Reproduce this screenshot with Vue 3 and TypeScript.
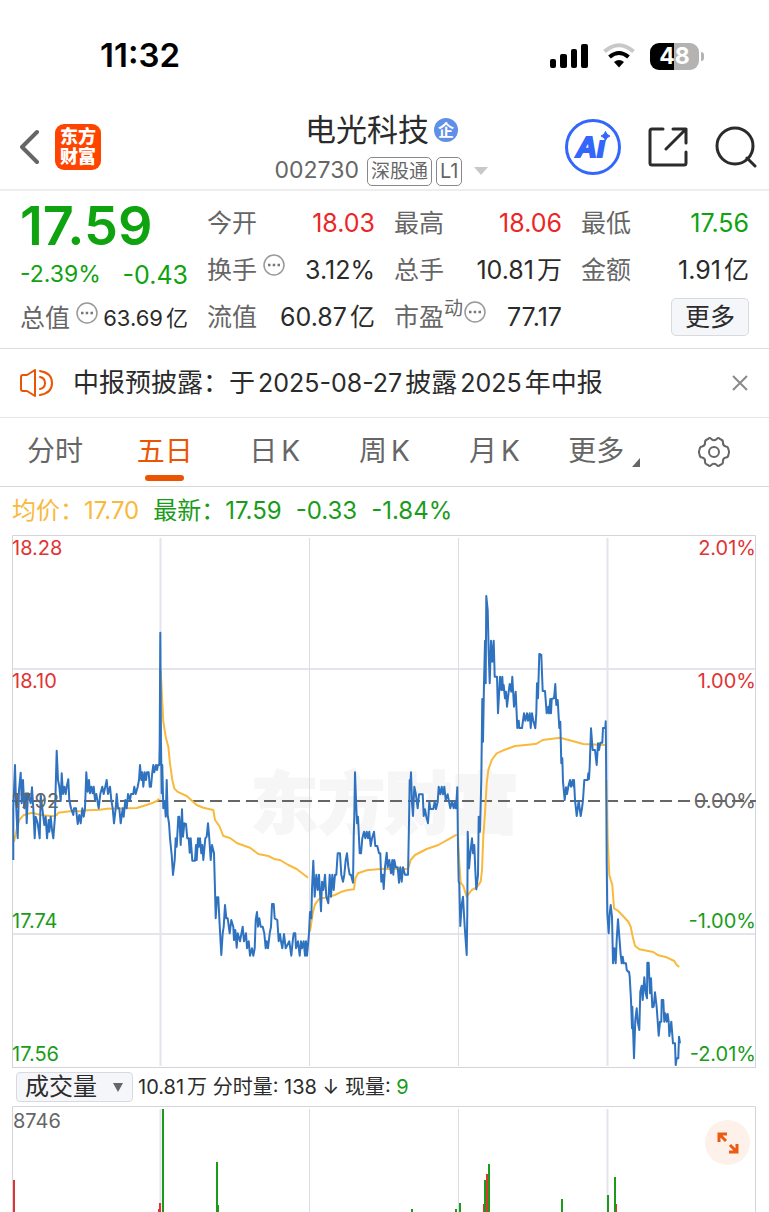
<script setup lang="ts">
import { ref } from 'vue'

type Tone = 'up' | 'down' | 'flat'
interface Stat {
  label: string
  value: string
  unit?: string
  tone: Tone
  sup?: string
  hint?: boolean
}

const stats: Stat[] = [
  { label: '今开', value: '18.03', tone: 'up' },
  { label: '最高', value: '18.06', tone: 'up' },
  { label: '最低', value: '17.56', tone: 'down' },
  { label: '换手', value: '3.12%', tone: 'flat', hint: true },
  { label: '总手', value: '10.81', unit: '万', tone: 'flat' },
  { label: '金额', value: '1.91', unit: '亿', tone: 'flat' },
  { label: '流值', value: '60.87', unit: '亿', tone: 'flat' },
  { label: '市盈', value: '77.17', tone: 'flat', sup: '动', hint: true },
]

const tabs = ['分时', '五日', '日K', '周K', '月K', '更多']
const active = ref('五日')
const noticeOpen = ref(true)
const indicator = ref('成交量')

// Samples are flat x,y pairs in thirds of a unit, relative to each block's origin.
function trace(left: number, top: number, pairs: number[]): string {
  const out: string[] = []
  for (let i = 0; i < pairs.length; i += 2) {
    out.push(`${(left + pairs[i] / 3).toFixed(1)},${(top + pairs[i + 1] / 3).toFixed(1)}`)
  }
  return out.join(' ')
}

const pricePoints = [
  trace(0, 590, [
    40, 810, 40, 655, 45, 525, 48, 640, 53, 745, 57, 600, 62, 548, 65, 640, 69, 570, 73, 655, 78, 610, 80, 700,
    84, 610, 92, 640, 96, 592, 100, 655, 104, 745, 107, 680, 113, 700, 119, 745, 122, 615, 127, 655, 133, 705,
    137, 680, 141, 745, 146, 690, 148, 725, 152, 680, 156, 720, 160, 745, 165, 680, 167, 590, 170, 482, 174, 570,
    178, 590, 182, 633, 185, 550, 189, 612, 193, 590, 197, 612, 200, 590, 205, 568, 208, 630, 213, 655, 220, 675,
    222, 655, 228, 655, 233, 702, 238, 675, 242, 700, 247, 655, 251, 680, 255, 655, 259, 547, 263, 605, 267, 570,
    270, 610, 274, 590, 278, 610, 281, 590, 285, 630, 289, 612, 296, 655, 301, 612, 307, 590, 311, 612, 316, 590,
    320, 570, 324, 612, 330, 590, 334, 630, 338, 655, 342, 700, 347, 655, 350, 612, 354, 655, 358, 655, 362, 700,
    368, 655, 371, 680, 376, 630, 380, 655, 384, 612, 390, 630, 393, 612, 400, 612, 403, 590, 407, 612, 413, 590,
    417, 570, 420, 525, 424, 570, 427, 547, 430, 590, 434, 547, 438, 570, 441, 547, 446, 547, 449, 590, 453, 590,
    457, 547, 460, 525, 463, 547, 468, 525, 471, 540, 474, 525, 478, 525, 479, 460, 481, 128, 483, 460, 485, 610,
    487, 525, 490, 655, 494, 633, 497, 680, 500, 570, 503, 675, 507, 700, 510, 745, 515, 795, 519, 855, 524, 810,
    527, 745, 530, 770, 535, 680, 538, 680, 542, 765, 546, 658, 549, 740, 553, 700, 558, 702, 562, 745, 566, 745,
    569, 788, 572, 745, 577, 812, 585, 812, 588, 765, 590, 810, 594, 745, 597, 770, 600, 745, 604, 790, 607, 765,
    610, 810, 616, 745, 620, 740, 624, 700, 628, 745, 632, 810, 636, 765, 642, 790, 645, 900, 647, 985, 651, 922,
    655, 922, 658, 985, 661, 1040, 664, 1095, 668, 1030, 671, 1010, 675, 945, 679, 985, 683, 985, 689, 1030,
    694, 990, 700, 1010, 702, 1050, 706, 1020, 710, 1073,
  ]),
  trace(200, 740, [
    113, 580, 120, 604, 128, 560, 132, 604, 138, 580, 141, 625, 146, 604, 150, 647, 156, 625, 160, 647, 164, 625,
    167, 540, 171, 516, 174, 560, 178, 535, 182, 560, 188, 560, 193, 580, 197, 625, 200, 604, 204, 625, 209, 580,
    213, 560, 216, 492, 221, 492, 224, 535, 232, 540, 236, 604, 240, 582, 243, 604, 247, 625, 252, 582, 257, 625,
    268, 604, 274, 647, 278, 604, 281, 580, 286, 580, 288, 625, 294, 604, 299, 647, 303, 604, 306, 625, 311, 604,
    315, 647, 318, 604, 321, 647, 325, 604, 327, 580, 330, 516, 334, 535, 336, 447, 340, 362, 344, 470, 349, 404,
    353, 450, 357, 404, 363, 514, 366, 425, 370, 450, 375, 404, 379, 470, 385, 490, 389, 404, 393, 470, 397, 404,
    401, 450, 405, 404, 409, 404, 413, 340, 420, 340, 424, 404, 429, 425, 433, 404, 437, 360, 441, 340, 445, 380,
    449, 404, 453, 404, 459, 428, 461, 290, 463, 230, 465, 97, 468, 180, 471, 250, 474, 230, 479, 340, 483, 340,
    487, 295, 492, 275, 496, 295, 500, 275, 504, 295, 508, 275, 512, 318, 516, 295, 522, 275, 526, 318, 532, 318,
    537, 340, 541, 340, 544, 425, 548, 404, 551, 447, 555, 382, 560, 338, 563, 382, 568, 360, 573, 400, 577, 360,
    580, 404, 583, 360, 587, 382, 593, 382, 597, 428, 601, 382, 605, 425, 609, 382, 615, 404, 624, 404, 627, 250,
    629, 120, 631, 140, 633, 97, 636, 190, 639, 228, 643, 140, 647, 160, 653, 205, 657, 163, 668, 163, 671, 228,
    675, 208, 679, 230, 684, 250, 688, 185, 691, 207, 700, 207, 704, 185, 708, 207, 713, 185, 716, 140, 721, 163,
    725, 140, 729, 163, 733, 140, 737, 180, 743, 163, 747, 185, 751, 205, 756, 185, 761, 205, 765, 185, 768, 205,
    772, 142,
  ]),
  trace(440, 580, [
    52, 622, 54, 800, 56, 905, 58, 910, 61, 1038, 65, 975, 69, 950, 74, 1040, 80, 1125, 82, 1000, 83, 755, 87, 865,
    91, 820, 96, 775, 99, 820, 103, 795, 106, 870, 109, 928, 114, 885, 116, 710, 120, 755, 124, 600, 127, 357,
    129, 485, 132, 310, 135, 182, 137, 310, 139, 48, 143, 90, 146, 220, 149, 310, 153, 182, 157, 245, 161, 182,
    164, 290, 171, 290, 174, 400, 180, 290, 184, 330, 187, 290, 189, 330, 191, 315, 195, 355, 198, 335, 201, 380,
    206, 335, 209, 312, 214, 335, 217, 290, 222, 380, 227, 335, 232, 444, 236, 422, 238, 444, 246, 444, 252, 400,
    256, 422, 261, 400, 264, 422, 269, 400, 272, 444, 276, 400, 280, 422, 286, 445, 289, 400, 291, 310, 294, 355,
    298, 222, 304, 225, 308, 333, 315, 333, 320, 400, 325, 380, 327, 400, 331, 357, 333, 400, 335, 357, 342, 355,
    346, 312, 349, 375, 353, 360, 358, 444, 361, 425, 364, 550, 367, 535, 369, 605, 374, 660, 378, 622, 381, 642,
    385, 620, 390, 600, 393, 620, 398, 600, 401, 620, 402, 600, 405, 660, 410, 708, 416, 663, 422, 708, 426, 685,
    429, 660, 433, 600, 443, 600, 445, 580, 447, 597, 449, 560, 453, 445, 458, 510, 465, 510, 470, 555, 474, 490,
    477, 510, 481, 488, 487, 488, 489, 444, 496, 444, 497, 424, 498, 500, 500, 850, 502, 1000, 506, 1060, 509, 1000,
    512, 975, 516, 1010, 519, 1150, 523, 1105, 527, 1150, 530, 1080, 534, 1018, 539, 1085, 542, 1125, 545, 1150,
    548, 1130, 551, 1150, 558, 1150, 560, 1170, 565, 1175,
  ]),
  trace(590, 700, [
    117, 815, 119, 830, 123, 900, 126, 985, 127, 920, 132, 1075, 136, 960, 140, 925, 143, 965, 148, 990, 151, 875,
    155, 857, 158, 900, 163, 832, 167, 880, 171, 895, 172, 788, 176, 788, 178, 835, 180, 880, 183, 835, 187, 922,
    191, 920, 195, 877, 200, 922, 206, 1007, 210, 965, 214, 965, 215, 900, 220, 900, 223, 965, 226, 940, 230, 965,
    233, 942, 236, 965, 238, 1008, 244, 965, 249, 1030, 255, 1030, 257, 1095, 260, 1075, 265, 1075, 267, 1010,
    270, 1030,
  ]),
].join(' ')

const averageLines = [
  trace(0, 590, [
    42, 755, 52, 710, 58, 690, 70, 676, 95, 668, 110, 672, 130, 676, 160, 679, 170, 675, 175, 668, 210, 664,
    240, 664, 262, 661, 300, 659, 320, 656, 410, 654, 430, 648, 455, 640, 470, 633, 478, 626,
  ]),
  trace(0, 590, [
    482, 240, 486, 320, 490, 395, 498, 445, 505, 470, 510, 520, 517, 570, 523, 595, 532, 605, 560, 618, 590, 645,
    610, 653, 640, 660, 645, 690, 658, 708, 670, 738, 690, 744, 712, 760, 750, 773, 775, 792, 805, 798, 825, 808,
    840, 810, 865, 825, 890, 837, 924, 863,
  ]),
  trace(200, 740, [
    330, 575, 338, 520, 345, 493, 358, 476, 375, 473, 405, 465, 425, 455, 440, 451, 462, 448, 466, 415, 474, 400,
    500, 391, 550, 386, 624, 387, 632, 360, 645, 345, 680, 327, 715, 315, 745, 298, 770, 284,
  ]),
  trace(440, 580, [
    54, 770, 58, 850, 62, 908, 70, 918, 80, 950, 95, 930, 110, 922, 122, 905, 126, 870, 130, 770, 135, 700, 140, 610,
    145, 570, 155, 540, 170, 520, 190, 511, 225, 498, 265, 494, 290, 491, 308, 480, 360, 473, 400, 484, 430, 492,
    495, 495,
  ]),
  trace(440, 580, [
    499, 600, 503, 780, 508, 885, 517, 915, 522, 985, 535, 993, 565, 1025, 572, 1040, 578, 1070, 585, 1097,
    598, 1108, 640, 1116, 655, 1126, 680, 1132, 703, 1143, 710, 1155, 718, 1161,
  ]),
]

const dayLines = [
  { x: 160, strong: true },
  { x: 309, strong: false },
  { x: 458, strong: false },
  { x: 607, strong: true },
]

interface Bar {
  x: number
  top: number
  tone: 'up' | 'down'
}
const bars: Bar[] = [
  { x: 13, top: 1180, tone: 'up' },
  { x: 158, top: 1209, tone: 'up' },
  { x: 159, top: 1203, tone: 'up' },
  { x: 162, top: 1109, tone: 'down' },
  { x: 216, top: 1162, tone: 'down' },
  { x: 217, top: 1205, tone: 'down' },
  { x: 411, top: 1209, tone: 'down' },
  { x: 455, top: 1209, tone: 'down' },
  { x: 459, top: 1203, tone: 'down' },
  { x: 483, top: 1204, tone: 'up' },
  { x: 484, top: 1180, tone: 'down' },
  { x: 488, top: 1164, tone: 'down' },
  { x: 486, top: 1174, tone: 'up' },
  { x: 561, top: 1199, tone: 'down' },
  { x: 607, top: 1195, tone: 'down' },
  { x: 615, top: 1204, tone: 'up' },
  { x: 614, top: 1177, tone: 'down' },
]
</script>

<template>
  <div class="page">
    <div class="status">
      <span class="time">11:32</span>
      <div class="status-icons">
        <svg width="38" height="26" viewBox="0 0 38 26" aria-hidden="true">
          <rect x="0" y="16" width="6" height="9" rx="2" />
          <rect x="10" y="11" width="7" height="14" rx="2" />
          <rect x="21" y="6" width="6" height="19" rx="2" />
          <rect x="31" y="1" width="7" height="24" rx="2" />
        </svg>
        <svg width="32" height="26" viewBox="0 0 32 26" fill="none" aria-hidden="true">
          <path d="M1.5 8.500Q16-4 30.500 8.500" stroke="#c8c8c8" stroke-width="4" />
          <path d="M6.500 14Q16 6 25.500 14" stroke="#000" stroke-width="4" />
          <path d="M11 19Q16 15 21 19L16 24.500Z" fill="#000" />
        </svg>
        <div class="battery"><span class="cell">48</span><i class="nub"></i></div>
      </div>
    </div>

    <header class="header">
      <div class="lead">
        <button class="plain" aria-label="返回">
          <svg width="20" height="36" viewBox="0 0 20 36" fill="none" stroke="#666" stroke-width="4" stroke-linecap="round" stroke-linejoin="round">
            <path d="M17 3 2 18l15 15" />
          </svg>
        </button>
        <div class="brand"><span>东方</span><span>财富</span></div>
      </div>
      <div class="title">
        <h1>电光科技<span class="badge">企</span></h1>
        <div class="code">
          <span class="num">002730</span>
          <span class="tag">深股通</span>
          <span class="tag l1">L1</span>
          <svg width="14" height="8" viewBox="0 0 14 8" aria-hidden="true"><path d="M0 0h14L7 8Z" fill="#c8c8c8" /></svg>
        </div>
      </div>
      <div class="actions">
        <button class="plain" aria-label="Ai">
          <svg width="56" height="56" viewBox="0 0 56 56">
            <circle cx="28" cy="28" r="26.500" fill="none" stroke="#3366fa" stroke-width="3" />
            <text class="ai" x="11" y="38">Aı</text>
            <path d="M40.500 12.500q1 3.500 4.500 4.500-3.500 1-4.500 4.500-1-3.500-4.500-4.500 3.500-1 4.500-4.500Z" fill="#3366fa" stroke="#3366fa" />
          </svg>
        </button>
        <button class="plain" aria-label="分享">
          <svg width="40" height="40" viewBox="0 0 40 40" fill="none" stroke="#2b2b2b" stroke-width="3" stroke-linecap="round" stroke-linejoin="round">
            <path d="M15 2H4Q2 2 2 4v32q0 2 2 2h32q2 0 2-2V25M25 2h13v14M38 2 18 22" />
          </svg>
        </button>
        <button class="plain" aria-label="搜索">
          <svg width="42" height="42" viewBox="0 0 42 42" fill="none" stroke="#2b2b2b" stroke-width="3" stroke-linecap="round">
            <circle cx="20" cy="20" r="18" />
            <path d="m32 32 8 8" />
          </svg>
        </button>
      </div>
    </header>

    <section class="quote">
      <div class="main">
        <div class="price">17.59</div>
        <div class="delta"><span class="pct">-2.39%</span><span>-0.43</span></div>
        <div class="cap">
          <span class="label">总值</span>
          <svg class="hint" width="22" height="22" viewBox="0 0 22 22" aria-hidden="true">
            <circle cx="11" cy="11" r="10" fill="none" stroke="#999" stroke-width="1.5" />
            <path d="M5 11h2.500M9.700 11h2.500M14.500 11h2.500" stroke="#777" stroke-width="2.500" />
          </svg>
          <span class="cap-value">63.69<span class="unit">亿</span></span>
        </div>
      </div>
      <div class="stats">
        <div v-for="s in stats" :key="s.label" class="stat">
          <span class="label">{{ s.label }}</span>
          <span v-if="s.sup" class="sup">{{ s.sup }}</span>
          <svg v-if="s.hint" class="hint" :class="{ tight: s.sup }" width="22" height="22" viewBox="0 0 22 22" aria-hidden="true">
            <circle cx="11" cy="11" r="10" fill="none" stroke="#999" stroke-width="1.5" />
            <path d="M5 11h2.500M9.700 11h2.500M14.500 11h2.500" stroke="#777" stroke-width="2.500" />
          </svg>
          <span class="value" :class="s.tone">{{ s.value }}<span v-if="s.unit" class="unit">{{ s.unit }}</span></span>
        </div>
        <div class="stat"><button class="more">更多</button></div>
      </div>
    </section>

    <section v-if="noticeOpen" class="notice">
      <svg width="33" height="28" viewBox="0 0 33 28" fill="none" stroke="#ea5504" stroke-width="2" stroke-linecap="round" stroke-linejoin="round" aria-hidden="true">
        <path d="M15 1v26l-8-5H3q-2 0-2-2V8q0-2 2-2h4ZM20 8q5 1 5 6t-5 6M20 2q12 2 12 12T20 26" />
      </svg>
      <p>中报预披露：于<span class="date">2025-08-27</span>披露<span class="date">2025</span>年中报</p>
      <button class="plain" aria-label="关闭" @click="noticeOpen = false">
        <svg width="16" height="16" viewBox="0 0 16 16" fill="none" stroke="#8a8a8a" stroke-width="2"><path d="m1 1 14 14M15 1 1 15" /></svg>
      </button>
    </section>

    <nav class="tabs">
      <button v-for="t in tabs" :key="t" class="tab" :class="{ active: active === t }" @click="active = t">
        <template v-if="t.endsWith('K')">{{ t[0] }}<span class="k">K</span></template>
        <template v-else>{{ t }}</template>
        <svg v-if="t === '更多'" class="corner" width="8" height="9" viewBox="0 0 8 9" aria-hidden="true"><path d="M8 0v9H0Z" fill="#666" /></svg>
      </button>
      <button class="tab" aria-label="设置">
        <svg width="32" height="30" viewBox="0 0 32 30" fill="none" stroke="#666" stroke-width="2" stroke-linejoin="round">
          <path d="M10 2Q12 0 13.500 2.200Q16 4.200 18.500 2.200Q20 0 22 2Q25 3 25 5Q24.500 9 28 9.500Q30 9.500 30.500 12.500Q31.500 15 30.500 17.500Q30 20.500 28 20.500Q24.500 21 25 25Q25 27 22 28Q20 30 18.500 27.800Q16 25.800 13.500 27.800Q12 30 10 28Q7 27 7 25Q7.500 21 4 20.500Q2 20.500 1.500 17.500Q.5 15 1.500 12.500Q2 9.500 4 9.500Q7.500 9 7 5Q7 3 10 2Z" />
          <circle cx="16" cy="15" r="5" />
        </svg>
      </button>
    </nav>

    <div class="summary">
      <span class="avg">均价：17.70</span>
      <span class="last">最新：17.59</span>
      <span class="last">-0.33</span>
      <span class="last">-1.84%</span>
    </div>

    <svg class="chart" viewBox="0 535 769 533" role="img" aria-label="五日走势">
      <text class="mark" x="385" y="828">东方财富</text>
      <g class="grid">
        <path class="strong" d="M12 669h744M12 934h744" />
        <path v-for="d in dayLines" :key="d.x" :class="{ strong: d.strong }" :d="`M${d.x + 0.5} 538v528`" />
        <path class="frame" d="M12.500 1068V535.500h743v532" />
        <path class="frame" d="M12 1067.500h744" />
      </g>
      <path class="base" d="M12 801h744" />
      <polyline v-for="(p, i) in averageLines" :key="i" class="average" :points="p" />
      <polyline class="trend" :points="pricePoints" />
      <g class="axis">
        <text class="up" x="12" y="555">18.28</text>
        <text class="up" x="12" y="688">18.10</text>
        <text x="12" y="808">17.92</text>
        <text class="down" x="12" y="928">17.74</text>
        <text class="down" x="12" y="1061">17.56</text>
        <g text-anchor="end">
          <text class="up" x="756" y="555">2.01%</text>
          <text class="up" x="756" y="688">1.00%</text>
          <text x="756" y="808">0.00%</text>
          <text class="down" x="756" y="928">-1.00%</text>
          <text class="down" x="756" y="1061">-2.01%</text>
        </g>
      </g>
    </svg>

    <div class="toolbar">
      <div class="picker">
        <select v-model="indicator" aria-label="指标">
          <option>成交量</option>
          <option>成交额</option>
        </select>
        <svg width="10" height="9" viewBox="0 0 10 9" aria-hidden="true"><path d="M0 0h10L5 9Z" fill="#666" /></svg>
      </div>
      <span class="readout">10.81<span class="unit">万</span> 分时量: 138 ↓ 现量: <b>9</b></span>
    </div>

    <div class="volume">
      <svg class="chart" viewBox="0 1106 769 106" role="img" aria-label="成交量">
        <g class="grid">
          <path v-for="d in dayLines" :key="d.x" :class="{ strong: d.strong }" :d="`M${d.x + 0.5} 1109v103`" />
          <path class="frame" d="M12.500 1212V1106.500h743v106" />
        </g>
        <rect v-for="b in bars" :key="b.x" :class="b.tone" :x="b.x" :y="b.top" width="2" :height="1212 - b.top" />
        <g class="axis"><text x="13" y="1128">8746</text></g>
      </svg>
      <button class="expand" aria-label="全屏">
        <svg width="24" height="24" viewBox="0 0 24 24" fill="none" stroke="#ea5b14" stroke-width="3">
          <path d="M3 11V3h8M3 3l7 7M21 13v8h-8M21 21l-7-7" />
        </svg>
      </button>
    </div>
  </div>
</template>

<style>
body {
  background: #fff;
}
</style>

<style scoped>
.page {
  font-family: Inter, 'Noto Sans CJK SC', sans-serif;
  font-weight: 400;
  line-height: 1.2;
  color: #2b2b2b;
  background: #fff;
  overflow: hidden;
}
svg {
  display: block;
  flex: none;
}
.plain {
  padding: 0;
  border: 0;
  background: none;
  cursor: pointer;
}
.status {
  display: flex;
  align-items: center;
  justify-content: space-between;
  height: 40px;
  padding: 36px 65px 28px 100px;
  color: #000;
}
.time {
  font-size: 33px;
  font-weight: 600;
}
.status-icons {
  display: flex;
  align-items: center;
  gap: 15px;
}
.battery {
  display: flex;
  align-items: center;
  gap: 2px;
}
.cell {
  width: 49px;
  border-radius: 9px;
  background: linear-gradient(to right, #000 48%, #b3b3b3 48%);
  color: #fff;
  font-size: 23px;
  font-weight: 700;
  line-height: 27px;
  text-align: center;
}
.nub {
  width: 3px;
  height: 9px;
  border-radius: 0 3px 3px 0;
  background: #b3b3b3;
}
.header {
  display: grid;
  grid-template-columns: 1fr auto 1fr;
  align-items: center;
  padding: 8px 12px 3px;
  border-bottom: 2px solid #eee;
}
.lead {
  display: flex;
  align-items: center;
  gap: 15px;
  margin-bottom: 4px;
  padding-left: 8px;
}
.brand {
  display: flex;
  flex-direction: column;
  align-items: center;
  justify-content: center;
  width: 46px;
  height: 46px;
  border-radius: 9px;
  background: #ff4400;
  color: #fff;
  font-size: 18px;
  font-weight: 900;
  line-height: 20px;
}
.title {
  display: flex;
  flex-direction: column;
  align-items: center;
  gap: 8px;
  margin-right: 6px;
}
h1 {
  display: flex;
  align-items: center;
  gap: 5px;
  margin: 0;
  font-size: 31px;
  font-weight: 400;
  line-height: 36px;
}
.badge {
  width: 24px;
  border-radius: 12px;
  background: #5f8fe8;
  color: #fff;
  font-size: 16px;
  font-weight: 700;
  line-height: 24px;
  text-align: center;
}
.code {
  display: flex;
  align-items: center;
  height: 30px;
  color: #666;
}
.num {
  margin-right: 8px;
  font-size: 23px;
}
.tag {
  margin-right: 4px;
  padding: 0 3px;
  border: 1px solid #888;
  border-radius: 5px;
  font-size: 19px;
  line-height: 27px;
}
.l1 {
  margin-right: 12px;
  font-size: 20px;
}
.actions {
  display: flex;
  align-items: center;
  justify-content: flex-end;
  gap: 27px;
  margin-bottom: 4px;
}
.ai {
  fill: #3366fa;
  stroke: #3366fa;
  stroke-width: 2;
  font-size: 29px;
  font-style: italic;
  font-weight: 900;
}
.quote {
  display: grid;
  grid-template-columns: minmax(0, 168fr) minmax(0, 542fr);
  column-gap: 19px;
  padding: 8px 20px;
  border-bottom: 1px solid #ddd;
}
.main {
  display: flex;
  flex-direction: column;
  color: #0fa30f;
}
.price {
  font-size: 54px;
  font-weight: 600;
  line-height: 54px;
}
.delta {
  display: flex;
  align-items: center;
  justify-content: space-between;
  height: 43px;
  font-size: 25px;
}
.pct {
  font-size: 23px;
}
.cap {
  display: flex;
  align-items: center;
  height: 44px;
  color: #2b2b2b;
}
.cap-value {
  margin-left: auto;
  font-size: 22px;
}
.stats {
  display: grid;
  grid-template-columns: repeat(3, 1fr);
  grid-auto-rows: 47px;
  column-gap: 19px;
}
.stat {
  display: flex;
  align-items: center;
  white-space: nowrap;
}
.label {
  color: #666;
  font-size: 25px;
}
.hint {
  margin: 0 0 10px 6px;
}
.tight {
  margin-left: 1px;
}
.sup {
  margin-bottom: 14px;
  color: #666;
  font-size: 19px;
}
.value {
  margin-left: auto;
  font-size: 25px;
}
.unit {
  margin-left: 3px;
}
.up {
  color: #ec2626;
  fill: #e03434;
}
.down {
  color: #0fa30f;
  fill: #1a9c1a;
}
.more {
  margin-left: auto;
  padding: 0 13px;
  border: 1px solid #d8dade;
  border-radius: 5px;
  background: #f5f6f9;
  color: #2b2b2b;
  font: inherit;
  font-size: 25px;
  line-height: 36px;
}
.notice {
  display: flex;
  align-items: center;
  height: 68px;
  padding: 0 21px 0 20px;
  border-bottom: 1px solid #e6e6e6;
}
.notice p {
  flex: 1;
  margin: 0 0 0 20px;
  font-size: 26px;
}
.date {
  margin: 0 3px;
  font-size: 25px;
}
.tabs {
  display: flex;
  height: 68px;
  border-bottom: 1px solid #d8d8d8;
}
.tab {
  position: relative;
  display: flex;
  flex: 1;
  align-items: center;
  justify-content: center;
  padding: 0;
  border: 0;
  background: none;
  color: #666;
  font: inherit;
  font-size: 28px;
  cursor: pointer;
}
.k {
  margin-left: 4px;
}
.corner {
  margin: 20px 0 0 8px;
}
.active {
  color: #ea5504;
}
.active::after {
  content: '';
  position: absolute;
  bottom: 5px;
  width: 39px;
  height: 6px;
  border-radius: 3px;
  background: #ea5504;
}
.summary {
  display: flex;
  align-items: center;
  gap: 14px;
  height: 48px;
  padding: 0 12px;
  font-size: 24px;
}
.avg {
  color: #f9b93c;
}
.last {
  color: #1a9c1a;
}
.chart {
  width: 100%;
  height: auto;
}
.grid path {
  fill: none;
  stroke: #dcdce4;
  stroke-width: 1;
}
.grid .strong {
  stroke: #e4e4ec;
  stroke-width: 2;
}
.grid .frame {
  stroke: #d4d4da;
}
.mark {
  fill: #f6f6f6;
  stroke: #f6f6f6;
  stroke-width: 2;
  font-size: 67px;
  font-weight: 900;
  text-anchor: middle;
}
.base {
  stroke: #666;
  stroke-width: 2;
  stroke-dasharray: 12 6;
}
.average,
.trend {
  fill: none;
  stroke-width: 2;
  stroke-linejoin: round;
}
.average {
  stroke: #f9b93c;
}
.trend {
  stroke: #2f72c0;
}
.axis {
  fill: #666;
  font-size: 20px;
}
.toolbar {
  display: flex;
  align-items: center;
  height: 38px;
  padding: 0 16px;
}
.picker {
  display: flex;
  align-items: center;
  padding-right: 9px;
  border: 1px solid #d8dade;
  border-radius: 4px;
  background: #f5f6f9;
}
.picker select {
  appearance: none;
  width: 96px;
  height: 28px;
  padding: 0 0 0 8px;
  border: 0;
  background: none;
  color: #2b2b2b;
  font: inherit;
  font-size: 24px;
  line-height: 28px;
}
.readout {
  margin-left: 5px;
  font-size: 20px;
  white-space: nowrap;
}
.readout b {
  color: #1a9c1a;
  font-weight: 400;
}
.volume {
  position: relative;
}
.expand {
  position: absolute;
  top: 14px;
  right: 19px;
  display: grid;
  place-items: center;
  width: 45px;
  height: 45px;
  padding: 0;
  border: 0;
  border-radius: 50%;
  background: #fdf1e9;
}
</style>
